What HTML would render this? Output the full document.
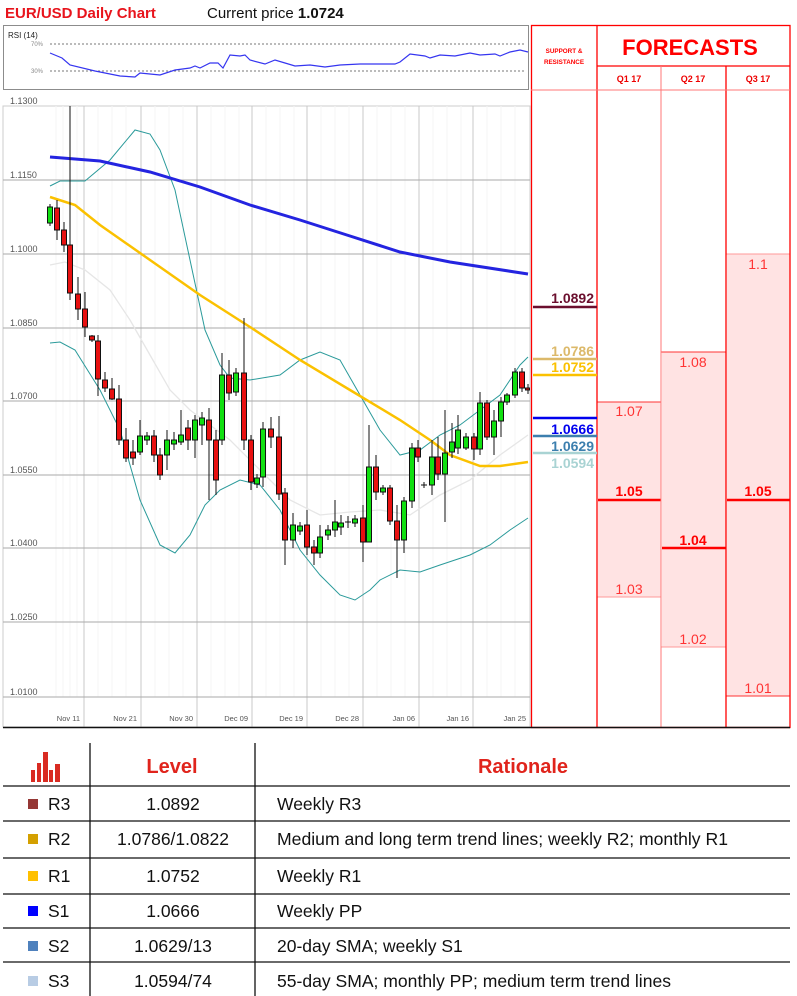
<!DOCTYPE html>
<html><head><meta charset="utf-8"><style>
html,body{margin:0;padding:0;background:#fff;width:797px;height:996px;overflow:hidden}
svg{display:block}
text{font-family:"Liberation Sans",sans-serif}
</style></head><body>
<svg width="797" height="996" viewBox="0 0 797 996" xmlns="http://www.w3.org/2000/svg">
<!-- Header -->
<text x="5" y="18" font-size="15" font-weight="bold" fill="#e8141c">EUR/USD Daily Chart</text>
<text x="207" y="18" font-size="15" fill="#111">Current price <tspan font-weight="bold">1.0724</tspan></text>

<!-- RSI box -->
<rect x="3.5" y="25.5" width="525" height="64" fill="#fff" stroke="#8c8c8c"/>
<text x="8" y="38" font-size="8" fill="#222">RSI (14)</text>
<text x="31" y="46" font-size="6" fill="#888">70%</text>
<text x="31" y="73" font-size="6" fill="#888">30%</text>
<line x1="50" y1="44" x2="526" y2="44" stroke="#777" stroke-dasharray="2,2"/>
<line x1="50" y1="71" x2="526" y2="71" stroke="#777" stroke-dasharray="2,2"/>
<polyline fill="none" stroke="#3535f0" stroke-width="1.2" points="50,53 62,58 70,65 95,71 120,76 135,77 140,73 150,74 160,75 175,70 190,68 195,66 200,68 210,63 218,63 223,68 230,55 240,56 245,55 250,60 265,64 275,60 285,63 295,66 310,65 325,67 340,65 360,64 380,64 395,64 400,62 410,54 425,56 430,58 440,55 455,56 470,53 480,55 495,54 500,56 510,52 520,50 528,52"/>

<!-- Chart area -->
<rect x="3" y="106" width="527" height="621" fill="#fff" stroke="#ccc"/>
<g stroke="#f6f6f6" stroke-width="1">
<line x1="56" y1="106" x2="56" y2="697"/><line x1="63" y1="106" x2="63" y2="697"/><line x1="70" y1="106" x2="70" y2="697"/><line x1="77" y1="106" x2="77" y2="697"/>
<line x1="98" y1="106" x2="98" y2="697"/><line x1="112" y1="106" x2="112" y2="697"/><line x1="126" y1="106" x2="126" y2="697"/>
<line x1="155" y1="106" x2="155" y2="697"/><line x1="169" y1="106" x2="169" y2="697"/><line x1="183" y1="106" x2="183" y2="697"/>
<line x1="211" y1="106" x2="211" y2="697"/><line x1="225" y1="106" x2="225" y2="697"/><line x1="239" y1="106" x2="239" y2="697"/>
<line x1="266" y1="106" x2="266" y2="697"/><line x1="280" y1="106" x2="280" y2="697"/><line x1="294" y1="106" x2="294" y2="697"/>
<line x1="321" y1="106" x2="321" y2="697"/><line x1="335" y1="106" x2="335" y2="697"/><line x1="349" y1="106" x2="349" y2="697"/>
<line x1="377" y1="106" x2="377" y2="697"/><line x1="391" y1="106" x2="391" y2="697"/><line x1="405" y1="106" x2="405" y2="697"/>
<line x1="433" y1="106" x2="433" y2="697"/><line x1="447" y1="106" x2="447" y2="697"/><line x1="461" y1="106" x2="461" y2="697"/>
<line x1="487" y1="106" x2="487" y2="697"/><line x1="501" y1="106" x2="501" y2="697"/><line x1="515" y1="106" x2="515" y2="697"/>
</g>
<g stroke="#c8c8c8">
<line x1="84" y1="106" x2="84" y2="727"/><line x1="141" y1="106" x2="141" y2="727"/><line x1="197" y1="106" x2="197" y2="727"/><line x1="252" y1="106" x2="252" y2="727"/>
<line x1="307" y1="106" x2="307" y2="727"/><line x1="363" y1="106" x2="363" y2="727"/><line x1="419" y1="106" x2="419" y2="727"/><line x1="473" y1="106" x2="473" y2="727"/>
</g>
<g stroke="#aaa">
<line x1="3" y1="180" x2="530" y2="180"/><line x1="3" y1="254" x2="530" y2="254"/><line x1="3" y1="328" x2="530" y2="328"/><line x1="3" y1="401" x2="530" y2="401"/>
<line x1="3" y1="475" x2="530" y2="475"/><line x1="3" y1="548" x2="530" y2="548"/><line x1="3" y1="622" x2="530" y2="622"/><line x1="3" y1="697" x2="530" y2="697"/>
</g>
<g font-size="9" fill="#555">
<text x="10" y="104">1.1300</text><text x="10" y="178">1.1150</text><text x="10" y="252">1.1000</text><text x="10" y="326">1.0850</text>
<text x="10" y="399">1.0700</text><text x="10" y="473">1.0550</text><text x="10" y="546">1.0400</text><text x="10" y="620">1.0250</text><text x="10" y="695">1.0100</text>
</g>
<g font-size="7.5" fill="#555" text-anchor="end">
<text x="80" y="721">Nov 11</text><text x="137" y="721">Nov 21</text><text x="193" y="721">Nov 30</text><text x="248" y="721">Dec 09</text>
<text x="303" y="721">Dec 19</text><text x="359" y="721">Dec 28</text><text x="415" y="721">Jan 06</text><text x="469" y="721">Jan 16</text><text x="526" y="721">Jan 25</text>
</g>

<!-- indicator lines -->
<polyline fill="none" stroke="#e6e6e6" stroke-width="1.3" points="50,265 65,262 85,270 110,290 130,320 150,355 170,390 190,410 210,425 230,440 260,470 290,500 320,515 350,512 380,510 410,515 440,495 470,480 500,455 528,435"/>
<polyline fill="none" stroke="#2a9a9a" stroke-width="1" points="50,186 60,181 85,181 110,160 135,130 150,134 160,150 175,190 190,260 205,330 220,365 230,378 250,380 280,375 300,360 320,352 340,360 360,395 380,430 400,455 420,450 440,435 460,425 480,410 500,395 520,365 528,357"/>
<polyline fill="none" stroke="#2a9a9a" stroke-width="1" points="50,343 60,342 75,350 100,390 120,430 140,500 160,545 175,553 190,535 205,505 220,490 240,480 260,485 280,510 300,550 320,575 340,595 355,600 370,590 380,580 400,570 420,572 440,565 470,555 490,545 510,530 528,518"/>
<polyline fill="none" stroke="#2424e0" stroke-width="3" points="50,157 100,161 150,172 200,187 250,205 300,220 350,236 400,252 450,262 528,274"/>
<polyline fill="none" stroke="#fbc100" stroke-width="2.5" points="50,197 75,205 100,225 150,260 200,295 250,327 300,360 350,390 400,420 430,440 450,455 480,466 500,466 528,462"/>

<!-- candles -->
<g stroke="#111" stroke-width="1">
<line x1="50" y1="204" x2="50" y2="226"/><line x1="57" y1="200" x2="57" y2="240"/><line x1="64" y1="222" x2="64" y2="252"/><line x1="70" y1="106" x2="70" y2="300"/>
<line x1="78" y1="277" x2="78" y2="320"/><line x1="85" y1="292" x2="85" y2="337"/><line x1="92" y1="335" x2="92" y2="342"/><line x1="98" y1="335" x2="98" y2="396"/>
<line x1="105" y1="372" x2="105" y2="392"/><line x1="112" y1="378" x2="112" y2="400"/><line x1="119" y1="385" x2="119" y2="445"/><line x1="126" y1="428" x2="126" y2="462"/>
<line x1="133" y1="440" x2="133" y2="465"/><line x1="140" y1="420" x2="140" y2="455"/><line x1="147" y1="432" x2="147" y2="445"/><line x1="154" y1="430" x2="154" y2="462"/>
<line x1="160" y1="448" x2="160" y2="480"/><line x1="167" y1="430" x2="167" y2="470"/><line x1="174" y1="432" x2="174" y2="450"/><line x1="181" y1="410" x2="181" y2="445"/>
<line x1="188" y1="420" x2="188" y2="450"/><line x1="195" y1="415" x2="195" y2="458"/><line x1="202" y1="412" x2="202" y2="445"/><line x1="209" y1="408" x2="209" y2="500"/>
<line x1="216" y1="430" x2="216" y2="495"/><line x1="222" y1="353" x2="222" y2="445"/><line x1="229" y1="360" x2="229" y2="400"/><line x1="236" y1="368" x2="236" y2="396"/>
<line x1="244" y1="318" x2="244" y2="450"/><line x1="251" y1="435" x2="251" y2="490"/><line x1="257" y1="474" x2="257" y2="488"/><line x1="263" y1="422" x2="263" y2="487"/>
<line x1="271" y1="417" x2="271" y2="448"/><line x1="279" y1="416" x2="279" y2="500"/><line x1="285" y1="488" x2="285" y2="565"/><line x1="293" y1="513" x2="293" y2="548"/>
<line x1="300" y1="522" x2="300" y2="535"/><line x1="307" y1="510" x2="307" y2="555"/><line x1="314" y1="540" x2="314" y2="565"/><line x1="320" y1="525" x2="320" y2="558"/>
<line x1="328" y1="525" x2="328" y2="540"/><line x1="335" y1="500" x2="335" y2="537"/><line x1="341" y1="515" x2="341" y2="535"/><line x1="348" y1="516" x2="348" y2="528"/>
<line x1="355" y1="515" x2="355" y2="527"/><line x1="363" y1="505" x2="363" y2="562"/><line x1="369" y1="425" x2="369" y2="542"/><line x1="376" y1="455" x2="376" y2="500"/>
<line x1="383" y1="485" x2="383" y2="495"/><line x1="390" y1="485" x2="390" y2="525"/><line x1="397" y1="505" x2="397" y2="578"/><line x1="404" y1="497" x2="404" y2="553"/>
<line x1="412" y1="443" x2="412" y2="508"/><line x1="418" y1="440" x2="418" y2="462"/><line x1="424" y1="482" x2="424" y2="488"/><line x1="432" y1="440" x2="432" y2="495"/>
<line x1="438" y1="437" x2="438" y2="480"/><line x1="445" y1="410" x2="445" y2="522"/><line x1="452" y1="423" x2="452" y2="458"/><line x1="458" y1="415" x2="458" y2="454"/>
<line x1="466" y1="433" x2="466" y2="450"/><line x1="474" y1="433" x2="474" y2="460"/><line x1="480" y1="392" x2="480" y2="455"/><line x1="487" y1="400" x2="487" y2="440"/>
<line x1="494" y1="410" x2="494" y2="455"/><line x1="501" y1="397" x2="501" y2="437"/><line x1="507" y1="393" x2="507" y2="405"/><line x1="515" y1="368" x2="515" y2="398"/>
<line x1="522" y1="368" x2="522" y2="392"/><line x1="528" y1="384" x2="528" y2="394"/>
</g>
<g stroke="#111" stroke-width="1">
<g fill="#11e011">
<rect x="47.5" y="207" width="5" height="16"/><rect x="137.5" y="436" width="5" height="16"/><rect x="144.5" y="436" width="5" height="4"/>
<rect x="164.5" y="440" width="5" height="15"/><rect x="171.5" y="440" width="5" height="4"/><rect x="178.5" y="435" width="5" height="7"/>
<rect x="192.5" y="420" width="5" height="20"/><rect x="199.5" y="418" width="5" height="7"/><rect x="219.5" y="375" width="5" height="65"/>
<rect x="233.5" y="373" width="5" height="19"/><rect x="254.5" y="478" width="5" height="6"/><rect x="260.5" y="429" width="5" height="48"/>
<rect x="290.5" y="525" width="5" height="15"/><rect x="297.5" y="526" width="5" height="5"/><rect x="317.5" y="537" width="5" height="16"/>
<rect x="325.5" y="530" width="5" height="5"/><rect x="332.5" y="522" width="5" height="8"/><rect x="338.5" y="523" width="5" height="4"/>
<rect x="352.5" y="519" width="5" height="4"/><rect x="366.5" y="467" width="5" height="75"/><rect x="380.5" y="488" width="5" height="4"/>
<rect x="401.5" y="501" width="5" height="39"/><rect x="409.5" y="448" width="5" height="53"/><rect x="429.5" y="457" width="5" height="28"/>
<rect x="442.5" y="453" width="5" height="21"/><rect x="449.5" y="442" width="5" height="10"/><rect x="455.5" y="430" width="5" height="18"/>
<rect x="463.5" y="437" width="5" height="11"/><rect x="477.5" y="403" width="5" height="46"/><rect x="491.5" y="421" width="5" height="16"/>
<rect x="498.5" y="402" width="5" height="19"/><rect x="504.5" y="395" width="5" height="7"/><rect x="512.5" y="372" width="5" height="23"/>
</g>
<g fill="#e81010">
<rect x="54.5" y="208" width="5" height="22"/><rect x="61.5" y="230" width="5" height="15"/><rect x="67.5" y="245" width="5" height="48"/>
<rect x="75.5" y="294" width="5" height="15"/><rect x="82.5" y="309" width="5" height="18"/><rect x="89.5" y="336" width="5" height="4"/>
<rect x="95.5" y="341" width="5" height="38"/><rect x="102.5" y="380" width="5" height="8"/><rect x="109.5" y="389" width="5" height="10"/>
<rect x="116.5" y="399" width="5" height="41"/><rect x="123.5" y="440" width="5" height="18"/><rect x="130.5" y="452" width="5" height="6"/>
<rect x="151.5" y="436" width="5" height="19"/><rect x="157.5" y="455" width="5" height="20"/><rect x="185.5" y="428" width="5" height="12"/>
<rect x="206.5" y="420" width="5" height="20"/><rect x="213.5" y="440" width="5" height="40"/><rect x="226.5" y="375" width="5" height="18"/>
<rect x="241.5" y="373" width="5" height="67"/><rect x="248.5" y="440" width="5" height="42"/><rect x="268.5" y="429" width="5" height="8"/>
<rect x="276.5" y="437" width="5" height="57"/><rect x="282.5" y="493" width="5" height="47"/><rect x="304.5" y="525" width="5" height="22"/>
<rect x="311.5" y="547" width="5" height="6"/><rect x="360.5" y="518" width="5" height="24"/><rect x="373.5" y="467" width="5" height="25"/>
<rect x="387.5" y="488" width="5" height="33"/><rect x="394.5" y="521" width="5" height="19"/><rect x="415.5" y="448" width="5" height="9"/>
<rect x="435.5" y="457" width="5" height="17"/><rect x="471.5" y="437" width="5" height="12"/><rect x="484.5" y="403" width="5" height="34"/>
<rect x="519.5" y="372" width="5" height="16"/><rect x="525.5" y="388" width="4" height="2"/>
</g>
<line x1="345" y1="522" x2="351" y2="522"/><line x1="421" y1="485" x2="427" y2="485"/>
</g>

<!-- Right forecast panel -->
<rect x="598" y="402" width="63" height="195" fill="#ffe3e3"/>
<rect x="662" y="352" width="64" height="295" fill="#ffe3e3"/>
<rect x="727" y="254" width="63" height="442" fill="#ffe3e3"/>
<g stroke="#f33" stroke-width="1">
<line x1="597" y1="402" x2="661" y2="402"/><line x1="597" y1="597" x2="661" y2="597" stroke="#f99"/>
<line x1="661" y1="352" x2="726" y2="352"/><line x1="661" y1="647" x2="726" y2="647" stroke="#f99"/>
<line x1="726" y1="254" x2="790" y2="254" stroke="#f99"/><line x1="726" y1="696" x2="790" y2="696"/>
</g>
<g stroke="#f00" stroke-width="2.5">
<line x1="598" y1="500" x2="661" y2="500"/><line x1="662" y1="548" x2="726" y2="548"/><line x1="727" y1="500" x2="790" y2="500"/>
</g>
<g fill="none" stroke="#f00" stroke-width="1.3">
<rect x="531.5" y="25.5" width="258.5" height="702"/>
<line x1="597" y1="25" x2="597" y2="727"/><line x1="726" y1="66" x2="726" y2="727"/>
<line x1="597" y1="66" x2="790" y2="66"/>
</g>
<g stroke="#f77" stroke-width="1">
<line x1="661" y1="66" x2="661" y2="727"/>
<line x1="531" y1="90" x2="790" y2="90"/>
</g>
<text x="690" y="55" font-size="22" font-weight="bold" fill="#f00" text-anchor="middle">FORECASTS</text>
<g font-size="6.3" font-weight="bold" fill="#f00" text-anchor="middle"><text x="564" y="53">SUPPORT &amp;</text><text x="564" y="64">RESISTANCE</text></g>
<g font-size="9" font-weight="bold" fill="#e00" text-anchor="middle"><text x="629" y="82">Q1 17</text><text x="693" y="82">Q2 17</text><text x="758" y="82">Q3 17</text></g>
<g font-size="14" fill="#f33" text-anchor="middle">
<text x="629" y="416">1.07</text><text x="629" y="594">1.03</text><text x="693" y="367">1.08</text><text x="693" y="644">1.02</text>
<text x="758" y="269">1.1</text><text x="758" y="693">1.01</text>
</g>
<g font-size="14" font-weight="bold" fill="#f00" text-anchor="middle">
<text x="629" y="496">1.05</text><text x="693" y="545">1.04</text><text x="758" y="496">1.05</text>
</g>
<!-- support lines -->
<g stroke-width="2.5">
<line x1="533" y1="307" x2="597" y2="307" stroke="#6b0f2e"/>
<line x1="533" y1="359" x2="597" y2="359" stroke="#dcb96a"/>
<line x1="533" y1="375" x2="597" y2="375" stroke="#fbc100"/>
<line x1="533" y1="418" x2="597" y2="418" stroke="#0000ee"/>
<line x1="533" y1="436" x2="597" y2="436" stroke="#3c7fae"/>
<line x1="533" y1="453" x2="597" y2="453" stroke="#a9d3d3"/>
</g>
<g font-size="14" font-weight="bold" text-anchor="end">
<text x="594" y="303" fill="#6b0f2e">1.0892</text>
<text x="594" y="356" fill="#dcb96a">1.0786</text>
<text x="594" y="372" fill="#fbc100">1.0752</text>
<text x="594" y="434" fill="#0000ee">1.0666</text>
<text x="594" y="451" fill="#3c7fae">1.0629</text>
<text x="594" y="468" fill="#a9d3d3">1.0594</text>
</g>
<line x1="3" y1="727.5" x2="790" y2="727.5" stroke="#111" stroke-width="1.5"/>

<!-- Table -->
<g stroke="#111" stroke-width="1.3">
<line x1="90" y1="743" x2="90" y2="996"/><line x1="255" y1="743" x2="255" y2="996"/>
<line x1="3" y1="786" x2="790" y2="786"/><line x1="3" y1="821" x2="790" y2="821"/><line x1="3" y1="858" x2="790" y2="858"/>
<line x1="3" y1="894" x2="790" y2="894"/><line x1="3" y1="928" x2="790" y2="928"/><line x1="3" y1="962" x2="790" y2="962"/>
</g>
<g fill="#d92b22">
<rect x="31" y="770" width="4" height="12"/><rect x="37" y="763" width="4" height="19"/><rect x="43" y="752" width="5" height="30"/><rect x="49" y="770" width="4" height="12"/><rect x="55" y="764" width="5" height="18"/>
</g>
<text x="172" y="773" font-size="20" font-weight="bold" fill="#e0241c" text-anchor="middle">Level</text>
<text x="523" y="773" font-size="20" font-weight="bold" fill="#e0241c" text-anchor="middle">Rationale</text>
<rect x="28" y="799" width="10" height="10" fill="#953735"/>
<rect x="28" y="834" width="10" height="10" fill="#d4a000"/>
<rect x="28" y="871" width="10" height="10" fill="#ffc000"/>
<rect x="28" y="906" width="10" height="10" fill="#0000ff"/>
<rect x="28" y="941" width="10" height="10" fill="#4f81bd"/>
<rect x="28" y="976" width="10" height="10" fill="#b8cce4"/>
<g font-size="17.5" fill="#111">
<text x="48" y="810">R3</text><text x="48" y="845">R2</text><text x="48" y="882">R1</text><text x="48" y="917">S1</text><text x="48" y="952">S2</text><text x="48" y="987">S3</text>
</g>
<g font-size="17.5" fill="#111" text-anchor="middle">
<text x="173" y="810">1.0892</text><text x="173" y="845">1.0786/1.0822</text><text x="173" y="882">1.0752</text><text x="173" y="917">1.0666</text><text x="173" y="952">1.0629/13</text><text x="173" y="987">1.0594/74</text>
</g>
<g font-size="17.5" fill="#111">
<text x="277" y="810">Weekly R3</text>
<text x="277" y="845" textLength="451" lengthAdjust="spacingAndGlyphs">Medium and long term trend lines; weekly R2; monthly R1</text>
<text x="277" y="882">Weekly R1</text>
<text x="277" y="917">Weekly PP</text>
<text x="277" y="952">20-day SMA; weekly S1</text>
<text x="277" y="987" textLength="394" lengthAdjust="spacingAndGlyphs">55-day SMA; monthly PP; medium term trend lines</text>
</g>
</svg>
</body></html>
